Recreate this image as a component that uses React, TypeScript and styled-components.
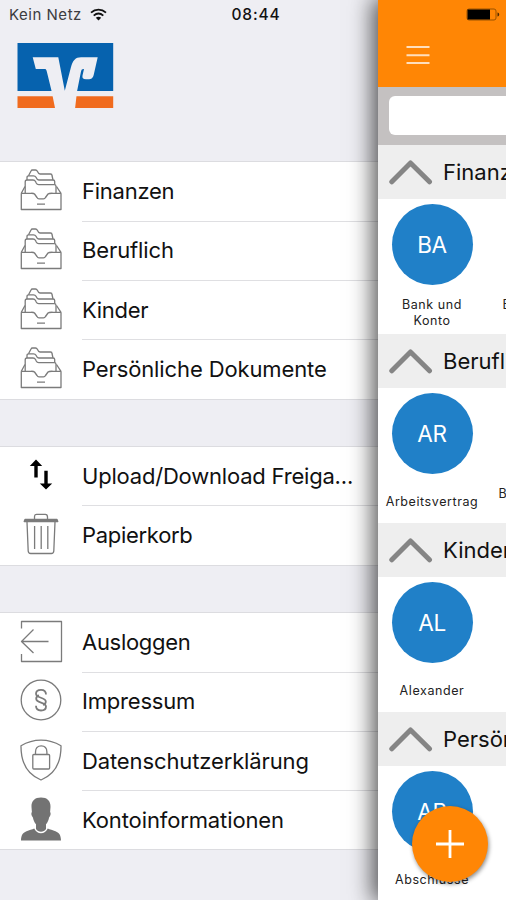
import React from 'react';
import styled, { createGlobalStyle } from 'styled-components';

const GlobalStyle = createGlobalStyle`
  * { box-sizing: border-box; }
  body { margin: 0; overflow: hidden; }
  svg { flex: none; }
`;

const Screen = styled.div`
  position: relative;
  display: flex;
  width: 506px;
  height: 900px;
  overflow: hidden;
  background: #eeeef3;
  color: #111;
  font-family: Inter, 'Liberation Sans', sans-serif;
`;

const StatusBar = styled.header`
  position: absolute;
  z-index: 3;
  top: 0;
  left: 0;
  width: 506px;
  height: 29px;
  padding: 0 6px 0 9px;
  display: grid;
  grid-template-columns: 1fr auto 1fr;
  align-items: center;
  font-size: 15px;
`;

const Carrier = styled.div`
  display: flex;
  align-items: center;
  gap: 8px;
  color: #3c3c40;
  letter-spacing: 0.52px;
`;

const Clock = styled.div`
  font-size: 15.5px;
  font-weight: 500;
  letter-spacing: 0.85px;
  padding-left: 3px;
`;

const BatterySlot = styled.div`
  display: flex;
  justify-content: flex-end;
`;

const Drawer = styled.nav`
  flex: none;
  width: 378px;
  padding-top: 43px;
`;

const LogoArea = styled.div`
  height: 118px;
  padding-left: 17px;
`;

const Group = styled.ul`
  list-style: none;
  margin: 0 0 46px;
  padding: 0;
  background: #fff;
  border-top: 1px solid #dcdce0;
  border-bottom: 1px solid #dcdce0;
`;

const MenuRow = styled.li`
  display: flex;
  height: 59.3px;
  padding-left: 20px;

  &:first-child {
    height: 58.8px;
  }
`;

const IconSlot = styled.span`
  flex: none;
  width: 62px;
  display: flex;
  align-items: center;
  padding-bottom: 2px;
`;

const MenuLabel = styled.span<{ $first: boolean; $spacing?: number }>`
  flex: 1;
  display: flex;
  align-items: center;
  white-space: nowrap;
  font-size: 22px;
  letter-spacing: ${(p) => p.$spacing ?? -0.12}px;
  border-top: 1px solid ${(p) => (p.$first ? 'transparent' : '#dfdfe2')};
  padding-bottom: 1px;
`;

const Panel = styled.main`
  position: relative;
  z-index: 2;
  flex: none;
  width: 128px;
  height: 900px;
  background: #fff;
  box-shadow: -3px 0 22px 2px rgba(0, 0, 0, 0.68);
`;

const TitleBar = styled.div`
  height: 87px;
  padding: 45px 0 0 28px;
  background: #ff8605;
`;

const SearchBar = styled.div`
  height: 58px;
  padding: 9px 0 10px 11px;
  background: #c4c1c1;
`;

const SearchField = styled.div`
  height: 39px;
  border-radius: 6px 0 0 6px;
  background: #fff;
`;

const SectionHeader = styled.h2`
  height: 54px;
  margin: 0;
  padding-left: 11px;
  display: flex;
  align-items: center;
  gap: 10px;
  overflow: hidden;
  background: #eeeeee;
  white-space: nowrap;
  font-size: 22px;
  font-weight: 400;
`;

const SectionBody = styled.div`
  display: flex;
  height: 135px;
  overflow: hidden;
`;

const Tile = styled.div`
  flex: none;
  width: 108px;
  padding-top: 5px;
  display: flex;
  flex-direction: column;
  align-items: center;
`;

const Avatar = styled.div`
  flex: none;
  width: 81px;
  height: 81px;
  border-radius: 50%;
  display: flex;
  align-items: center;
  justify-content: center;
  background: #2080c8;
  color: #fff;
  font-size: 22.5px;
  letter-spacing: -0.3px;
`;

const TileLabel = styled.div`
  flex: none;
  height: 55px;
  display: flex;
  align-items: center;
  text-align: center;
  white-space: pre-line;
  font-size: 12.5px;
  line-height: 15.5px;
  letter-spacing: 0.58px;
  color: #222;
`;

const NextTile = styled.div<{ $inset: number }>`
  flex: none;
  padding: 98px 0 0 ${(p) => p.$inset}px;
  font-size: 12.5px;
  line-height: 15.5px;
  color: #222;
`;

const AddButton = styled.button`
  position: absolute;
  left: 34px;
  top: 806px;
  width: 76px;
  height: 76px;
  padding: 0;
  border: 0;
  border-radius: 50%;
  display: grid;
  place-items: center;
  background: #ff8605;
  box-shadow: 1px 2px 4px rgba(0, 0, 0, 0.45);
`;

const LineIcon = styled.svg`
  display: block;
  overflow: visible;
  fill: none;
  stroke: #7b7b7b;
  stroke-width: 1.3;
  stroke-linejoin: round;
`;

const BankLogo = () => (
  <svg width="97" height="66" viewBox="0 0 97 66" aria-label="Bank">
    <path fill="#0662ae" d="M.5 0h95.700v48H.5z" />
    <path fill="#f06b1e" d="M.5 53.300h95.700V65H.5z" />
    <path
      fill="#eeeef3"
      d="M15.700 14.300H41.300L47.800 47.700 54 24C55.800 17.500 58.500 14.300 64 14.300H80.700L76.800 31.500C76 35 74.500 36.300 71 36.300H69C66 36.300 65 35 65.500 32.500L67 26H66.500C65 26 64.400 26.800 64 28.500L60 48.500 58 66H38.200L34.700 48.500 29.800 28.500C29.300 26.500 28.800 26 27.500 26H18.800z"
    />
  </svg>
);

const Folders = () => (
  <LineIcon width="42" height="42" viewBox="0 0 42 42">
    <path d="M1.300 24.300V40.500H41V24.300H34C32 24.300 29 24 28 25L25.500 28.500C25 29.500 24.500 29.800 23.500 29.800H19C18 29.800 17.500 29.500 17 28.500L14.500 25C13.500 24 12 24.300 10 24.300zM1.300 24.300 5 17.500M41 24.300 36.500 17.500" />
    <path d="M5.200 24V13C5.200 11.500 5.700 11 7 11H13C14.500 11 15 11.500 15.700 12.800L16.200 14C16.800 15.200 17.300 15.700 18.700 15.700H34.300C35.500 15.700 36 16.200 36 17.500V24" />
    <path d="M7 11V8.500C7 7.300 7.500 6.800 8.700 6.800H13.500C15 6.800 15.500 7.300 16 8.300 16.800 10.300 17.300 11 18.700 11H33C34.200 11 34.700 11.500 34.700 12.500V15.500" />
    <path d="M8.500 6.800 11 2C11.300 1.300 11.600 1 12.400 1H15.500C16.500 1 17 1.500 17.500 2.500 18.200 4.300 18.700 5 20 5H30.500C31.500 5 32 5.500 32 6.500L33 11M17 35.200h8" />
  </LineIcon>
);

const Transfer = () => (
  <svg width="42" height="42" viewBox="0 0 42 42">
    <path d="M16 23.500V8M26 16.800V30" stroke="#000" strokeWidth="3.400" fill="none" />
    <path d="M16 5.500 22.200 12H9.800zM26 35.500 19.800 29.500h12.400z" fill="#000" />
  </svg>
);

const Trash = () => (
  <LineIcon width="42" height="42" viewBox="0 0 42 42">
    <path d="M5 6.500h32l.8 2H4.200z" fill="#7b7b7b" />
    <path d="M14.500 6.500V4C14.500 2.200 15.100 1.300 16.700 1.300h8.600c1.600 0 2.200.9 2.200 2.700v2.500M7 9l1.200 29c.1 1.800.8 2.500 2.500 2.500h20.600c1.700 0 2.400-.7 2.500-2.500L35 9" />
    <path d="M14.600 13v23M21.200 13v23M27.800 13v23" />
  </LineIcon>
);

const Logout = () => (
  <LineIcon width="42" height="42" viewBox="0 0 42 42">
    <path d="M1.500 8.500V1.500h40v40h-40V34M28.500 21.500H1.800M13.500 9.500 1.500 21.500l12 11.500" />
  </LineIcon>
);

const Paragraph = () => (
  <LineIcon width="42" height="42" viewBox="0 0 42 42">
    <circle cx="21" cy="21" r="19.800" />
    <path
      strokeWidth="1.800"
      d="M26 15.500c0-3-2-4.700-5-4.700s-5 1.500-5 4c0 4.700 9.800 3.200 9.800 7.800 0 1.800-1.200 3-2.800 3.400M16 26.800c0 3 2 4.700 5 4.700s5-1.500 5-4c0-4.700-9.800-3.200-9.800-7.800 0-1.800 1.200-3 2.800-3.400"
    />
  </LineIcon>
);

const Shield = () => (
  <LineIcon width="42" height="42" viewBox="0 0 42 42">
    <path d="M21 1.200c7 0 13.700 1.800 20 5.600C41.200 23 35.500 35 21 41 6.500 35 .8 23 1 6.800 7.300 3 14 1.200 21 1.200z" />
    <rect x="12.800" y="15.500" width="16.800" height="14.500" rx="1" />
    <path d="M15.500 15.500V13c0-3.800 2.200-6.200 5.700-6.200s5.700 2.400 5.700 6.200v2.500" />
  </LineIcon>
);

const Person = () => (
  <svg width="42" height="44" viewBox="0 0 42 44" fill="#737373">
    <path d="M21 .5c6 0 9.800 3.300 9.500 9.500l-.4 5c1 .8.6 4-1 5.500-.5 3-1.600 5-3.100 6.800V32c-1.200 1.700-2.900 2.700-5 2.700S17.200 33.700 16 32v-4.700c-1.500-1.800-2.600-3.800-3.100-6.800-1.600-1.500-2-4.700-1-5.500l-.4-5C11.200 3.800 15 .5 21 .5z" />
    <path d="M14.200 31.500C15.700 34.700 18 36.300 21 36.300s5.300-1.600 6.800-4.800c2 1 5 1.700 7.700 2.800 4 1.700 5.300 4.200 5.500 9.200H1c.2-5 1.500-7.500 5.500-9.200 2.700-1.100 5.700-1.800 7.700-2.800z" />
  </svg>
);

const Wifi = () => (
  <svg width="17" height="13" viewBox="0 0 17 13" fill="none" stroke="#111" strokeWidth="1.800">
    <path d="M1 4.700c4.400-4 10.600-4 15 0M3.700 7.600c2.900-2.600 6.700-2.600 9.600 0" />
    <path d="M5.800 9.700c1.700-1.300 3.700-1.300 5.400 0L8.500 12.500z" fill="#111" stroke="none" />
  </svg>
);

const Battery = () => (
  <svg width="34" height="13" viewBox="0 0 34 13">
    <rect x="1" y="1" width="29" height="11" rx="2" fill="none" stroke="#9a5300" strokeWidth="1" />
    <path d="M1.500 1.500H24v10H1.500z" fill="#000" />
    <path d="M31.500 4.500c2.300.7 2.300 3.300 0 4z" fill="#4c2900" />
  </svg>
);

const Burger = () => (
  <svg width="24" height="21" viewBox="0 0 24 21" stroke="#ffdfbe" strokeWidth="2">
    <path d="M.5 2h23M.5 10.200h23M.5 18h23" />
  </svg>
);

const ChevronUp = () => (
  <svg width="44" height="25" viewBox="0 0 44 25" fill="none" stroke="#858585" strokeWidth="5" strokeLinecap="round" strokeLinejoin="round">
    <path d="M2.800 21.800 21.500 3l19 18.800" />
  </svg>
);

const Plus = () => (
  <svg width="28" height="28" viewBox="0 0 28 28" stroke="#fff" strokeWidth="2.800">
    <path d="M14 0v28M0 14h28" />
  </svg>
);

type Entry = { label: string; Icon: React.FC; spacing?: number };

const groups: Entry[][] = [
  [
    { label: 'Finanzen', Icon: Folders, spacing: -0.25 },
    { label: 'Beruflich', Icon: Folders },
    { label: 'Kinder', Icon: Folders, spacing: -0.3 },
    { label: 'Persönliche Dokumente', Icon: Folders },
  ],
  [
    { label: 'Upload/Download Freiga...', Icon: Transfer, spacing: -0.2 },
    { label: 'Papierkorb', Icon: Trash, spacing: -0.3 },
  ],
  [
    { label: 'Ausloggen', Icon: Logout, spacing: -0.3 },
    { label: 'Impressum', Icon: Paragraph, spacing: -0.2 },
    { label: 'Datenschutzerklärung', Icon: Shield },
    { label: 'Kontoinformationen', Icon: Person },
  ],
];

const sections = [
  { title: 'Finanzen', initials: 'BA', label: 'Bank und\nKonto', next: 'E', inset: 16.5 },
  { title: 'Beruflich', initials: 'AR', label: 'Arbeitsvertrag', next: 'B', inset: 12.5 },
  { title: 'Kinder', initials: 'AL', label: 'Alexander', next: '', inset: 0 },
  { title: 'Persönliche Dokumente', initials: 'AB', label: 'Abschlüsse', next: '', inset: 0 },
];

export default function App() {
  return (
    <Screen>
      <GlobalStyle />
      <StatusBar>
        <Carrier>
          Kein Netz <Wifi />
        </Carrier>
        <Clock>08:44</Clock>
        <BatterySlot>
          <Battery />
        </BatterySlot>
      </StatusBar>
      <Drawer>
        <LogoArea>
          <BankLogo />
        </LogoArea>
        {groups.map((entries, g) => (
          <Group key={g}>
            {entries.map(({ label, Icon, spacing }, i) => (
              <MenuRow key={label}>
                <IconSlot>
                  <Icon />
                </IconSlot>
                <MenuLabel $first={i === 0} $spacing={spacing}>
                  {label}
                </MenuLabel>
              </MenuRow>
            ))}
          </Group>
        ))}
      </Drawer>
      <Panel>
        <TitleBar>
          <Burger />
        </TitleBar>
        <SearchBar>
          <SearchField />
        </SearchBar>
        {sections.map((s) => (
          <section key={s.title}>
            <SectionHeader>
              <ChevronUp />
              {s.title}
            </SectionHeader>
            <SectionBody>
              <Tile>
                <Avatar>{s.initials}</Avatar>
                <TileLabel>{s.label}</TileLabel>
              </Tile>
              {s.next && <NextTile $inset={s.inset}>{s.next}</NextTile>}
            </SectionBody>
          </section>
        ))}
        <AddButton aria-label="Hinzufügen">
          <Plus />
        </AddButton>
      </Panel>
    </Screen>
  );
}
